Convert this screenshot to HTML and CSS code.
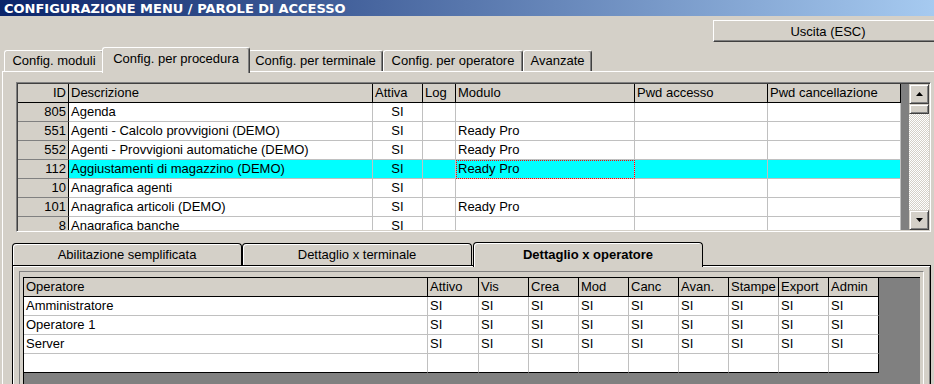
FILE: index.html
```html
<!DOCTYPE html>
<html lang="it">
<head>
    <meta charset="UTF-8">
    <meta name="viewport" content="width=device-width, initial-scale=1.0">
    <title>Configurazione menu / Parole di accesso</title>
    <link rel="stylesheet" href="styles.css">
</head>
<body>
<div class="window">
    <div class="titlebar">CONFIGURAZIONE MENU / PAROLE DI ACCESSO</div>

    <div class="toolbar">
        <button class="btn-exit">Uscita (ESC)</button>
    </div>

    <div class="tabs">
        <div class="tab tab-moduli">Config. moduli</div>
        <div class="tab tab-procedura active">Config. per procedura</div>
        <div class="tab tab-terminale">Config. per terminale</div>
        <div class="tab tab-operatore">Config. per operatore</div>
        <div class="tab tab-avanzate">Avanzate</div>
    </div>

    <div class="page">
        <!-- griglia procedure -->
        <div class="grid-proc">
            <div class="grid-area">
                <table class="sg">
                    <colgroup>
                        <col style="width:51px"><col style="width:304px"><col style="width:50px"><col style="width:33px">
                        <col style="width:179px"><col style="width:133px"><col style="width:133px">
                    </colgroup>
                    <tr class="head">
                        <th class="num">ID</th><th>Descrizione</th><th>Attiva</th><th>Log</th>
                        <th>Modulo</th><th>Pwd accesso</th><th>Pwd cancellazione</th>
                    </tr>
                    <tr>
                        <td class="fixed num">805</td><td>Agenda</td><td class="c">SI</td><td></td><td></td><td></td><td></td>
                    </tr>
                    <tr>
                        <td class="fixed num">551</td><td>Agenti - Calcolo provvigioni (DEMO)</td><td class="c">SI</td><td></td><td>Ready Pro</td><td></td><td></td>
                    </tr>
                    <tr>
                        <td class="fixed num">552</td><td>Agenti - Provvigioni automatiche (DEMO)</td><td class="c">SI</td><td></td><td>Ready Pro</td><td></td><td></td>
                    </tr>
                    <tr class="sel">
                        <td class="fixed num">112</td><td>Aggiustamenti di magazzino (DEMO)</td><td class="c">SI</td><td></td><td class="focus">Ready Pro</td><td></td><td></td>
                    </tr>
                    <tr>
                        <td class="fixed num">10</td><td>Anagrafica agenti</td><td class="c">SI</td><td></td><td></td><td></td><td></td>
                    </tr>
                    <tr>
                        <td class="fixed num">101</td><td>Anagrafica articoli (DEMO)</td><td class="c">SI</td><td></td><td>Ready Pro</td><td></td><td></td>
                    </tr>
                    <tr>
                        <td class="fixed num">8</td><td>Anagrafica banche</td><td class="c">SI</td><td></td><td></td><td></td><td></td>
                    </tr>
                </table>
            </div>
            <div class="scrollbar">
                <div class="sb-btn">
                    <svg width="7" height="4" viewBox="0 0 7 4"><polygon points="3.5,0 7,4 0,4" fill="#000"/></svg>
                </div>
                <div class="sb-thumb"></div>
                <div class="sb-track"></div>
                <div class="sb-btn">
                    <svg width="7" height="4" viewBox="0 0 7 4"><polygon points="0,0 7,0 3.5,4" fill="#000"/></svg>
                </div>
            </div>
        </div>

        <div class="subtabs">
            <div class="subtab">Abilitazione semplificata</div>
            <div class="subtab">Dettaglio x terminale</div>
            <div class="subtab active">Dettaglio x operatore</div>
        </div>

        <div class="subpage">
            <div class="bevel">
                <div class="grid-op">
                    <table class="sg sg-op">
                        <colgroup>
                            <col style="width:404px"><col style="width:51px">
                            <col style="width:50px"><col style="width:50px"><col style="width:50px"><col style="width:50px">
                            <col style="width:50px"><col style="width:50px"><col style="width:50px"><col style="width:50px">
                        </colgroup>
                        <tr class="head">
                            <th>Operatore</th><th>Attivo</th><th>Vis</th><th>Crea</th><th>Mod</th>
                            <th>Canc</th><th>Avan.</th><th>Stampe</th><th>Export</th><th>Admin</th>
                        </tr>
                        <tr>
                            <td>Amministratore</td><td>SI</td><td>SI</td><td>SI</td><td>SI</td><td>SI</td><td>SI</td><td>SI</td><td>SI</td><td>SI</td>
                        </tr>
                        <tr>
                            <td>Operatore 1</td><td>SI</td><td>SI</td><td>SI</td><td>SI</td><td>SI</td><td>SI</td><td>SI</td><td>SI</td><td>SI</td>
                        </tr>
                        <tr>
                            <td>Server</td><td>SI</td><td>SI</td><td>SI</td><td>SI</td><td>SI</td><td>SI</td><td>SI</td><td>SI</td><td>SI</td>
                        </tr>
                        <tr>
                            <td></td><td></td><td></td><td></td><td></td><td></td><td></td><td></td><td></td><td></td>
                        </tr>
                    </table>
                </div>
            </div>
        </div>
    </div>
</div>
</body>
</html>
```

FILE: styles.css
```css
body {
    margin: 0;
    padding: 0;
    overflow: hidden;
    font-family: "Liberation Sans", Arial, sans-serif;
    font-size: 13px;
    color: #000;
    background-color: #d4d0c8;
}
.window {
    width: 934px;
    height: 384px;
    overflow: hidden;
    background-color: #d4d0c8;
}

/* barra del titolo */
.titlebar {
    height: 16px;
    padding-left: 4px;
    line-height: 18px;
    font-family: "DejaVu Sans", sans-serif;
    font-weight: bold;
    font-size: 13px;
    color: #fff;
    white-space: nowrap;
    background: linear-gradient(to right, #0a246a, #a6caf0);
}

.toolbar {
    height: 31px;
    display: flex;
    justify-content: flex-end;
    align-items: flex-start;
}
.btn-exit {
    margin-top: 4px;
    margin-right: -9px;
    width: 230px;
    height: 22px;
    padding: 0;
    font-family: "Liberation Sans", Arial, sans-serif;
    font-size: 13px;
    color: #000;
    background-color: #d4d0c8;
    border: 1px solid;
    border-color: #fff #404040 #404040 #fff;
    box-shadow: inset -1px -1px #808080;
}

/* schede superiori */
.tabs {
    height: 24px;
    padding-left: 4px;
    display: flex;
    align-items: flex-end;
}
.tab {
    height: 21px;
    box-sizing: border-box;
    border: 1px solid;
    border-bottom: none;
    border-color: #fff #404040 #fff #fff;
    border-radius: 3px 3px 0 0;
    box-shadow: inset -1px 0 #808080;
    line-height: 19px;
    text-align: center;
    white-space: nowrap;
    background-color: #d4d0c8;
}
.tab-moduli { width: 100px; }
.tab-procedura { width: 148px; }
.tab-terminale { width: 135px; }
.tab-operatore { width: 140px; }
.tab-avanzate { width: 69px; }
.tab.active {
    height: 26px;
    margin: 0 -2px -2px -2px;
    line-height: 21px;
    position: relative;
    z-index: 1;
}

.page {
    margin-left: 2px;
    height: 320px;
    padding: 10px 3px 0 9px;
    border-top: 1px solid #fff;
    border-left: 1px solid #fff;
}

/* griglia procedure */
.grid-proc {
    margin-left: 4px;
    height: 150px;
    box-sizing: border-box;
    padding: 1px;
    display: flex;
    border: 1px solid;
    border-color: #808080 #fff #fff #808080;
    box-shadow: inset 1px 1px #404040, inset -1px -1px #d4d0c8;
}
.grid-area {
    flex: 1;
    overflow: hidden;
    background-color: #808080;
}
.sg {
    border-collapse: separate;
    border-spacing: 0;
    table-layout: fixed;
    width: 883px;
    background-color: #fff;
}
.sg th,
.sg td {
    box-sizing: border-box;
    padding: 0 2px;
    height: 19px;
    line-height: 18px;
    font-weight: normal;
    text-align: left;
    white-space: nowrap;
    overflow: hidden;
    border-right: 1px solid #c0c0c0;
    border-bottom: 1px solid #c0c0c0;
}
.sg th {
    background-color: #d4d0c8;
    border-right-color: #000;
    border-bottom-color: #000;
}
.sg td.fixed {
    background-color: #d4d0c8;
    border-right-color: #000;
    border-bottom-color: #808080;
}
.sg .num {
    text-align: right;
}
.sg td.c {
    text-align: center;
}
.sg tr.sel td {
    background-color: #00ffff;
}
.sg tr.sel td.fixed {
    background-color: #d4d0c8;
}
.sg td.focus {
    outline: 1px dotted #ff0000;
    outline-offset: -1px;
}

.scrollbar {
    width: 20px;
    display: flex;
    flex-direction: column;
}
.sb-btn,
.sb-thumb {
    box-sizing: border-box;
    border: 1px solid;
    border-color: #d4d0c8 #404040 #404040 #d4d0c8;
    box-shadow: inset 1px 1px #fff, inset -1px -1px #808080;
    background-color: #d4d0c8;
}
.sb-btn {
    height: 20px;
    display: flex;
    align-items: center;
    justify-content: center;
}
.sb-thumb {
    height: 10px;
}
.sb-track {
    flex: 1;
    background: repeating-conic-gradient(#fff 0 25%, #d4d0c8 0 50%) 0 0 / 2px 2px;
}

/* schede inferiori */
.subtabs {
    margin-top: 10px;
    height: 23px;
    display: flex;
    align-items: flex-end;
}
.subtab {
    width: 230px;
    height: 22px;
    box-sizing: border-box;
    border: 1px solid #000;
    border-bottom: none;
    border-radius: 4px 4px 0 0;
    box-shadow: inset 1px 1px #fff;
    line-height: 21px;
    text-align: center;
    white-space: nowrap;
    background-color: #d4d0c8;
}
.subtab.active {
    height: 25px;
    margin-left: 1px;
    margin-bottom: -2px;
    font-weight: bold;
    line-height: 24px;
    position: relative;
    z-index: 1;
}

.subpage {
    height: 140px;
    padding: 5px 6px;
    border: 1px solid #000;
    box-shadow: inset 1px 1px #fff, inset -1px 0 #808080;
}
.bevel {
    height: 130px;
    padding: 5px 3px 0 3px;
    border: 1px solid;
    border-color: #808080 #fff #fff #808080;
}
.grid-op {
    height: 120px;
    border-top: 1px solid #000;
    border-left: 1px solid #000;
    background-color: #808080;
}
.sg-op {
    width: 855px;
}
.sg-op td:last-child,
.sg-op th:last-child {
    border-right-color: #000;
}
.sg-op tr:last-child td {
    border-bottom-color: #000;
}
```
